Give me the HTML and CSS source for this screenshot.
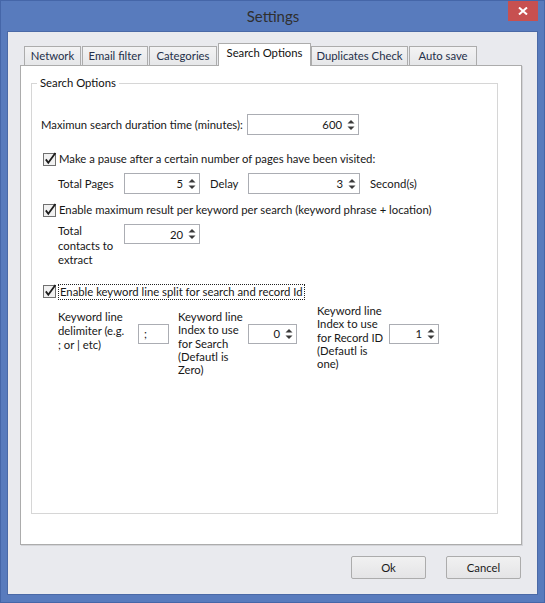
FILE: index.html
```html
<!DOCTYPE html>
<html lang="en">
<head>
    <meta charset="UTF-8">
    <title>Settings</title>
    <link rel="stylesheet" href="styles.css">
</head>
<body>
    <div class="window">
        <div class="titlebar">
            <span></span>
            <div class="title">Settings</div>
            <button class="close" title="Close">
                <svg width="10" height="8" viewBox="0 0 10 8"><path d="M1 0.5 L9 7.5 M9 0.5 L1 7.5" stroke="#fff" stroke-width="2"/></svg>
            </button>
        </div>

        <div class="client">
            <div class="tabs">
                <div class="tab t-network">Network</div>
                <div class="tab t-email">Email filter</div>
                <div class="tab t-cat">Categories</div>
                <div class="tab active t-search">Search Options</div>
                <div class="tab t-dup">Duplicates Check</div>
                <div class="tab t-auto">Auto save</div>
            </div>

            <div class="panel">
                <div class="group">
                    <span class="legend">Search Options</span>

                    <div class="row row-duration">
                        <label class="lbl lbl-duration">Maximun search duration time (minutes):</label>
                        <div class="spin w-wide"><span class="val">600</span><span class="arrows"></span></div>
                    </div>

                    <div class="check check-pause">
                        <span class="box"></span>
                        <span class="ctext">Make a pause after a certain number of pages have been visited:</span>
                    </div>

                    <div class="row row-pages">
                        <label class="lbl lbl-pages">Total Pages</label>
                        <div class="spin w-mid"><span class="val">5</span><span class="arrows"></span></div>
                        <label class="lbl lbl-delay">Delay</label>
                        <div class="spin w-wide"><span class="val">3</span><span class="arrows"></span></div>
                        <label class="lbl lbl-sec">Second(s)</label>
                    </div>

                    <div class="check check-max">
                        <span class="box"></span>
                        <span class="ctext">Enable maximum result per keyword per search (keyword phrase + location)</span>
                    </div>

                    <div class="row row-contacts">
                        <label class="lbl lbl-multi lbl-contacts">Total<br>contacts to<br>extract</label>
                        <div class="spin w-mid short"><span class="val">20</span><span class="arrows"></span></div>
                    </div>

                    <div class="check check-split">
                        <span class="box"></span>
                        <span class="ctext focus">Enable keyword line split for search and record Id</span>
                    </div>

                    <div class="row row-split">
                        <label class="lbl lbl-multi lbl-delim">Keyword line<br>delimiter (e.g.<br>; or | etc)</label>
                        <div class="textbox">;</div>
                        <label class="lbl lbl-multi lbl-idx">Keyword line<br>Index to use<br>for Search<br>(Defautl is<br>Zero)</label>
                        <div class="spin w-small short"><span class="val">0</span><span class="arrows"></span></div>
                        <label class="lbl lbl-multi lbl-rec">Keyword line<br>Index to use<br>for Record ID<br>(Defautl is<br>one)</label>
                        <div class="spin w-small2 short"><span class="val">1</span><span class="arrows"></span></div>
                    </div>
                </div>
            </div>

            <div class="buttons">
                <button class="btn">Ok</button>
                <button class="btn">Cancel</button>
            </div>
        </div>
    </div>

    <script>
        // up / down arrows of the numeric boxes
        var arrowSvg = '<svg width="8" height="12" viewBox="0 0 8 12">' +
            '<path d="M4 1 L7.5 4.5 L0.5 4.5 Z" fill="#3a3a3a"/>' +
            '<path d="M0.5 7.5 L7.5 7.5 L4 11 Z" fill="#3a3a3a"/></svg>';
        document.querySelectorAll('.arrows').forEach(function (el) {
            el.innerHTML = arrowSvg;
        });

        var checkSvg = '<svg width="15" height="15" viewBox="0 0 15 15">' +
            '<rect x="0.5" y="1.5" width="12" height="12" fill="#f1f1f1" stroke="#707070"/>' +
            '<path d="M2.8 7.4 L5.3 10.8 L12.4 1" fill="none" stroke="#1d1d1d" stroke-width="1.8"/></svg>';
        document.querySelectorAll('.box').forEach(function (el) {
            el.innerHTML = checkSvg;
        });
    </script>
</body>
</html>
```

FILE: styles.css
```css
* { margin: 0; padding: 0; box-sizing: border-box; }
body {
    font-family: Lato, "Liberation Sans", sans-serif;
    font-size: 11.3px;
    color: #171717;
    background: #587bbd;
}
.window {
    width: 545px;
    height: 603px;
    background: #587bbd;
    border: 1px solid #4566a8;
}
.titlebar {
    height: 30px;
    display: grid;
    grid-template-columns: 1fr auto 1fr;
}
.title {
    font-size: 15px;
    color: #2f2f2f;
    line-height: 30px;
    padding-left: 1px;
}
.close {
    justify-self: end;
    align-self: start;
    width: 30px;
    height: 20px;
    margin-right: 6px;
    background: #c75050;
    border: none;
    display: flex;
    align-items: center;
    justify-content: center;
}
.client {
    margin: 0 6px;
    height: 564px;
    background: #e9eaee;
    border: 1px solid #4a69a6;
    padding: 11px 16px 0 12px;
}

/* tabs */
.tabs {
    display: flex;
    align-items: flex-end;
    height: 23px;
    padding-left: 4px;
    margin-bottom: -1px;
    position: relative;
    z-index: 1;
}
.tab {
    height: 20px;
    border: 1px solid #acacac;
    background: linear-gradient(#f3f3f4, #e6e7e9);
    color: #25304a;
    text-align: center;
    line-height: 18px;
    margin-right: 1px;
    white-space: nowrap;
}
.tab.active {
    height: 23px;
    background: #fff;
    border-bottom: none;
    color: #111;
    line-height: 18px;
    margin-right: 0;
}
.t-network { width: 57px; }
.t-email { width: 66px; }
.t-cat { width: 68px; }
.t-search { width: 93px; }
.t-dup { width: 97px; }
.t-auto { width: 68px; }

.panel {
    width: 502px;
    height: 480px;
    background: #fff;
    border: 1px solid #acacac;
    box-shadow: 1px 1px 0 #d3d4d8;
    padding: 17px 0 0 10px;
}
.group {
    position: relative;
    width: 467px;
    height: 431px;
    border: 1px solid #d6d6d6;
    padding: 0 0 0 9px;
}
.legend {
    position: absolute;
    left: 5px;
    top: -9px;
    background: #fff;
    padding: 0 3px;
    line-height: 16px;
    color: #111;
}

/* rows */
.row {
    display: flex;
    align-items: flex-start;
}
.lbl {
    white-space: nowrap;
    line-height: 21px;
}
.lbl-multi { line-height: 14px; }
.row-duration { margin-top: 30px; }
.lbl-duration { width: 206px; }
.row-pages { margin-top: 6px; margin-left: 17px; }
.lbl-pages { width: 66px; }
.lbl-delay { width: 38px; margin-left: 10px; }
.lbl-sec { margin-left: 10px; }
.row-contacts { margin-top: 5px; margin-left: 17px; }
.lbl-contacts { width: 66px; margin-top: 1px; line-height: 14.6px; }
.row-contacts .spin { margin-top: 1px; }
.row-split { margin-top: 3px; margin-left: 17px; }
.lbl-delim { width: 80px; margin-top: 7px; line-height: 14px; }
.lbl-idx { width: 70px; margin-left: 9px; margin-top: 7px; line-height: 13.4px; }
.lbl-rec { width: 72px; margin-left: 20px; margin-top: 1px; line-height: 13.4px; }
.row-split .spin,
.row-split .textbox { margin-top: 21px; }

/* numeric up/down */
.spin {
    height: 21px;
    border: 1px solid #abadb3;
    background: #fff;
    display: flex;
    align-items: center;
}
.spin.short { height: 20px; }
.spin .val {
    flex: 1;
    text-align: right;
    padding-right: 3px;
}
.spin .arrows {
    width: 13px;
    display: flex;
    justify-content: center;
    padding-right: 2px;
}
.spin .arrows svg { display: block; }
.w-wide { width: 112px; }
.w-mid { width: 76px; }
.w-small { width: 49px; }
.w-small2 { width: 50px; }
.textbox {
    width: 31px;
    height: 20px;
    border: 1px solid #abadb3;
    background: #fff;
    padding-left: 5px;
    line-height: 18px;
}

/* checkboxes */
.check {
    display: flex;
    align-items: center;
    height: 16px;
    margin-left: 2px;
}
.box { width: 15px; height: 15px; }
.box svg { display: block; }
.ctext {
    margin-left: 1px;
    white-space: nowrap;
    line-height: 14px;
}
.ctext.focus {
    border: 1px dotted #222;
    padding: 0 1px;
    margin-left: 0;
}
.check-pause { margin-top: 16px; }
.check-max { margin-top: 8px; }
.check-split { margin-top: 16px; }

/* dialog buttons */
.buttons {
    display: flex;
    justify-content: flex-end;
    gap: 20px;
    margin-top: 11px;
}
.btn {
    width: 75px;
    height: 23px;
    border: 1px solid #acacac;
    border-radius: 2px;
    background: linear-gradient(#f1f1f1, #e4e4e6);
    font-family: inherit;
    font-size: 11.3px;
    color: #1b1b1b;
}
```
